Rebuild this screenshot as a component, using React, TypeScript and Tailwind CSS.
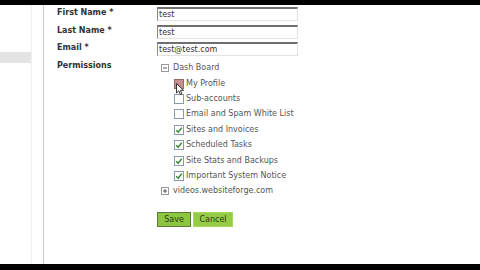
import React from "react";

const font = { fontFamily: '"DejaVu Sans", Verdana, sans-serif' };

function Check({ checked, hover }: { checked?: boolean; hover?: boolean }) {
  return (
    <span
      className={
        "w-[10px] h-[10px] border flex items-center justify-center shrink-0 " +
        (hover ? "border-[#9a6a6a] bg-[#c98f8f]" : "border-[#8a9aa8] bg-white")
      }
    >
      {checked && (
        <svg width="8" height="8" viewBox="0 0 8 8">
          <path d="M1.2 4.2 L3.2 6.2 L6.8 1.6" fill="none" stroke="#2f8a2f" strokeWidth="1.5" />
        </svg>
      )}
    </span>
  );
}

function TreeBox({ plus }: { plus?: boolean }) {
  return (
    <svg width="8" height="8" viewBox="0 0 8 8" className="shrink-0">
      <rect x="0.5" y="0.5" width="7" height="7" fill="white" stroke="#9a9a9a" />
      <path d="M2 4 H6" stroke="#555" />
      {plus && <path d="M4 2 V6" stroke="#555" />}
    </svg>
  );
}

const items: { label: string; checked: boolean; hover?: boolean }[] = [
  { label: "My Profile", checked: false, hover: true },
  { label: "Sub-accounts", checked: false },
  { label: "Email and Spam White List", checked: false },
  { label: "Sites and Invoices", checked: true },
  { label: "Scheduled Tasks", checked: true },
  { label: "Site Stats and Backups", checked: true },
  { label: "Important System Notice", checked: true },
];

function Field({ label, value }: { label: string; value: string }) {
  return (
    <div className="flex items-start h-[17.5px]">
      <div className="w-[100px] text-[8px] font-bold text-[#333] leading-[10px] pt-[1px]">{label}</div>
      <div className="w-[141px] h-[14px] border-t-2 border-l border-t-[#6f6f6f] border-l-[#8a8a8a] border-r border-b border-r-[#e2e2e2] border-b-[#e2e2e2] bg-white text-[8px] text-[#333] leading-[11px] pl-[1px]">
        {value}
      </div>
    </div>
  );
}

export default function App() {
  return (
    <div className="w-[480px] h-[270px] relative overflow-hidden bg-white flex flex-col" style={font}>
      <div className="h-[5px] bg-black shrink-0" />
      <div className="flex-1 flex min-h-0">
        <div className="w-[44px] shrink-0 border-r border-r-[#c8c8c8] flex">
          <div className="w-[32px] border-r border-r-[#efefef] flex flex-col">
            <div className="h-[47px]" />
            <div className="h-[11px] bg-[#e4e4e4]" />
          </div>
        </div>
        <div className="flex-1 pl-[13px] pt-[2px] flex flex-col">
          <Field label="First Name *" value="test" />
          <Field label="Last Name *" value="test" />
          <Field label="Email *" value="test@test.com" />
          <div className="flex items-start">
            <div className="w-[100px] text-[8px] font-bold text-[#333] leading-[10px] pt-[1px]">Permissions</div>
            <div className="flex flex-col text-[8px] text-[#555] leading-[10px] pt-[1px]">
              <div className="flex items-center h-[15.4px] pl-[4px] gap-[4px]">
                <TreeBox />
                <span>Dash Board</span>
              </div>
              {items.map((it) => (
                <div key={it.label} className="flex items-center h-[15.4px] pl-[17px] gap-[2px]">
                  <Check checked={it.checked} hover={it.hover} />
                  <span>{it.label}</span>
                </div>
              ))}
              <div className="flex items-center h-[15.4px] pl-[4px] gap-[4px]">
                <TreeBox plus />
                <span>videos.websiteforge.com</span>
              </div>
            </div>
          </div>
          <div className="flex gap-[2px] mt-[13px] ml-[100px]">
            <button className="w-[34px] h-[15px] bg-[#8cc63e] border border-[#5e7a38] text-[8px] text-[#2b3a12] leading-[12px]">
              Save
            </button>
            <button className="w-[40px] h-[15px] bg-[#96cc45] border border-[#a8d860] text-[8px] text-[#2b3a12] leading-[12px]">
              Cancel
            </button>
          </div>
        </div>
      </div>
      <div className="h-[6px] bg-black shrink-0" />
      <svg className="absolute left-[176px] top-[83px]" width="9" height="13" viewBox="0 0 9 13">
        <path d="M0.5 0.5 L0.5 10 L2.8 7.8 L4.4 11.6 L5.9 11 L4.4 7.3 L7.6 7.3 Z" fill="white" stroke="#222" strokeWidth="0.9" strokeLinejoin="round" />
      </svg>
    </div>
  );
}
